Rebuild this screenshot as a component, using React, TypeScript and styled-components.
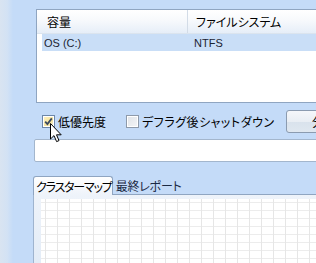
import React from "react";
import styled, { createGlobalStyle } from "styled-components";

const GlobalStyle = createGlobalStyle`
  html, body {
    margin: 0;
    padding: 0;
    background: #c4dbf8;
  }
  body {
    font-family: "Noto Sans CJK JP", "Liberation Sans", sans-serif;
    font-size: 12px;
    color: #000;
  }
`;

const Frame = styled.div`
  position: relative;
  width: 316px;
  height: 263px;
  overflow: hidden;
  display: flex;
  background: #c4dbf8;
`;

const EdgeStrip = styled.div`
  width: 13px;
  flex: none;
  background: linear-gradient(to right, #d9e4f1 0%, #d3e2f4 55%, #c4dbf8 100%);
`;

const Main = styled.div`
  flex: 1;
  display: flex;
  flex-direction: column;
  padding-top: 9px;
  min-width: 0;
`;

const ListBox = styled.div`
  margin-left: 23px;
  width: 320px;
  height: 92px;
  border: 1px solid #8fa5c1;
  border-right: none;
  background: #fff;
  flex: none;
`;

const HeaderRow = styled.div`
  display: flex;
  height: 24px;
  background: linear-gradient(to bottom, #ffffff 0%, #f7f9fc 45%, #e6eef8 100%);
  border-bottom: 1px solid #dbe4ee;
  box-sizing: border-box;
`;

const HeaderCell = styled.div<{ $w?: number; $pad: number }>`
  width: ${({ $w }) => ($w ? `${$w}px` : "auto")};
  flex: ${({ $w }) => ($w ? "none" : "1")};
  padding-left: ${({ $pad }) => $pad}px;
  box-sizing: border-box;
  display: flex;
  align-items: center;
  font-size: 12px;
  font-feature-settings: "palt";
  color: #000;
  border-right: ${({ $w }) => ($w ? "1px solid #d3dce7" : "none")};
`;

const DataRow = styled.div`
  display: flex;
  height: 17px;
  margin-left: 5px;
  background: #c9def7;
`;

const DataCell = styled.div<{ $w?: number; $pad: number }>`
  width: ${({ $w }) => ($w ? `${$w}px` : "auto")};
  flex: ${({ $w }) => ($w ? "none" : "1")};
  padding-left: ${({ $pad }) => $pad}px;
  box-sizing: border-box;
  display: flex;
  align-items: center;
  font-family: "Liberation Sans", sans-serif;
  font-size: 11px;
  color: #1b2433;
`;

const OptionsRow = styled.div`
  display: flex;
  align-items: center;
  height: 22px;
  margin-top: 7px;
  padding-left: 29px;
  flex: none;
`;

const CheckItem = styled.label<{ $gap: number }>`
  display: flex;
  align-items: center;
  gap: 3px;
  margin-right: ${({ $gap }) => $gap}px;
  white-space: nowrap;
`;

const Box = styled.span<{ $hover?: boolean }>`
  width: 13px;
  height: 13px;
  box-sizing: border-box;
  border: 1px solid ${({ $hover }) => ($hover ? "#6d87a8" : "#8e9aaa")};
  background: ${({ $hover }) =>
    $hover
      ? "linear-gradient(135deg, #fff4c8 0%, #f6e39a 60%, #e9f0f8 100%)"
      : "linear-gradient(135deg, #dfe3e8 0%, #f4f5f7 100%)"};
  box-shadow: inset 0 0 0 1px #fff;
  display: flex;
  align-items: center;
  justify-content: center;
  flex: none;
`;

const Label = styled.span<{ $ls?: number }>`
  font-size: 12px;
  font-feature-settings: "palt";
  color: #000;
  letter-spacing: ${({ $ls }) => $ls ?? 0}px;
`;

const Button = styled.button`
  width: 76px;
  height: 23px;
  flex: none;
  margin-left: auto;
  margin-right: -46px;
  border: 1px solid #8b9bb0;
  border-radius: 3px;
  background: linear-gradient(to bottom, #f5f7fa 0%, #e9eef4 50%, #d9e2ec 51%, #dfe7f0 100%);
  font-family: "Noto Sans CJK JP", sans-serif;
  font-size: 12px;
  color: #000;
  padding: 0;
`;

const InputBox = styled.div`
  margin-top: 7px;
  margin-left: 21px;
  width: 320px;
  height: 23px;
  box-sizing: border-box;
  border: 1px solid #a3b6cd;
  border-radius: 2px;
  background: #fff;
  flex: none;
`;

const TabStrip = styled.div`
  display: flex;
  align-items: flex-end;
  margin-top: 14px;
  margin-left: 20px;
  height: 18px;
  border-bottom: 1px solid #8fa5c1;
  flex: none;
`;

const Tab = styled.div<{ $active?: boolean }>`
  height: ${({ $active }) => ($active ? "19px" : "17px")};
  margin-bottom: ${({ $active }) => ($active ? "-1px" : "0")};
  padding: ${({ $active }) => ($active ? "0 0 0 2px" : "0 0 0 3px")};
  box-sizing: border-box;
  display: flex;
  align-items: center;
  font-size: 12px;
  font-feature-settings: "palt";
  letter-spacing: ${({ $active }) => ($active ? "-1.2px" : "-0.2px")};
  color: ${({ $active }) => ($active ? "#000" : "#1b2a44")};
  background: ${({ $active }) =>
    $active ? "linear-gradient(to bottom, #ffffff 0%, #eef3fa 100%)" : "transparent"};
  border: ${({ $active }) => ($active ? "1px solid #8fa5c1" : "none")};
  border-bottom: none;
  border-radius: 3px 3px 0 0;
`;

const Panel = styled.div`
  flex: 1;
  margin-left: 20px;
  border-left: 1px solid #9fb4cf;
  background: linear-gradient(to bottom, #eef3fa 0%, #e3ecf7 100%);
  padding: 4px 0 0 7px;
  display: flex;
`;

const ClusterGrid = styled.div`
  flex: 1;
  background-color: #ffffff;
  background-image: linear-gradient(to right, #e6e6e6 1px, transparent 1px),
    linear-gradient(to bottom, #ececec 1px, transparent 1px);
  background-size: 12px 8px;
  background-position: 4px 3px;
`;

const Cursor = styled.svg`
  position: absolute;
  left: 50px;
  top: 123px;
  pointer-events: none;
`;

const CheckMark = () => (
  <svg width="9" height="9" viewBox="0 0 9 9">
    <path d="M1.2 4.6 L3.4 7 L7.8 1.4" fill="none" stroke="#3c4a5f" strokeWidth="1.8" />
  </svg>
);

export default function App() {
  return (
    <>
      <GlobalStyle />
      <Frame>
        <EdgeStrip />
        <Main>
          <ListBox>
            <HeaderRow>
              <HeaderCell $w={151} $pad={10}>容量</HeaderCell>
              <HeaderCell $pad={8}>ファイルシステム</HeaderCell>
            </HeaderRow>
            <DataRow>
              <DataCell $w={146} $pad={2}>OS (C:)</DataCell>
              <DataCell $pad={6}>NTFS</DataCell>
            </DataRow>
          </ListBox>
          <OptionsRow>
            <CheckItem $gap={20}>
              <Box $hover>
                <CheckMark />
              </Box>
              <Label>低優先度</Label>
            </CheckItem>
            <CheckItem $gap={0}>
              <Box />
              <Label $ls={0.5}>デフラグ後シャットダウン</Label>
            </CheckItem>
            <Button>分析</Button>
          </OptionsRow>
          <InputBox />
          <TabStrip>
            <Tab $active>クラスターマップ</Tab>
            <Tab>最終レポート</Tab>
          </TabStrip>
          <Panel>
            <ClusterGrid />
          </Panel>
        </Main>
        <Cursor width="13" height="20" viewBox="0 0 13 20">
          <path
            d="M0.5 0.5 L0.5 16 L4 12.6 L6.6 18.6 L9 17.6 L6.5 11.8 L11.2 11.8 Z"
            fill="#fff"
            stroke="#000"
            strokeWidth="1"
            strokeLinejoin="round"
          />
        </Cursor>
      </Frame>
    </>
  );
}
